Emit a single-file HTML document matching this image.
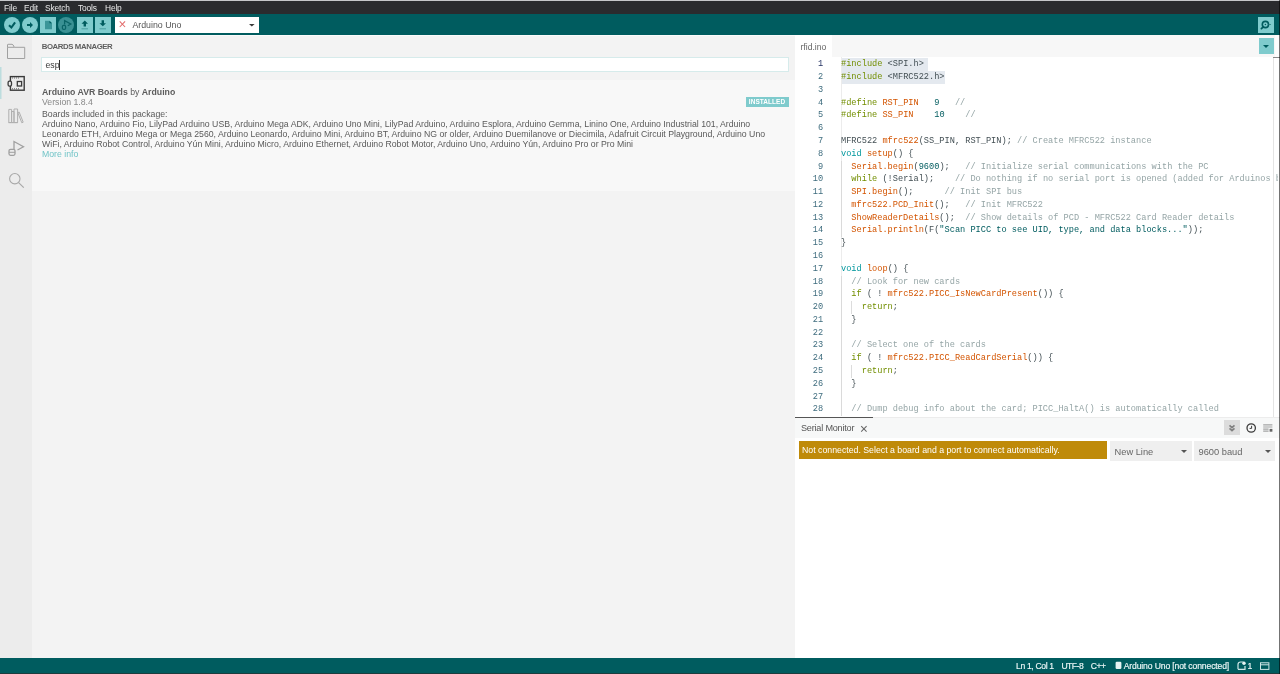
<!DOCTYPE html>
<html><head><meta charset="utf-8">
<style>
*{margin:0;padding:0;box-sizing:border-box}
html,body{width:1280px;height:674px;overflow:hidden;background:#fff;font-family:"Liberation Sans",sans-serif}
#root{position:absolute;left:0;top:0;width:1280px;height:674px;will-change:transform}
div,span,svg{position:absolute}
.t{white-space:pre;line-height:1}
#topline{left:0;top:0;width:1280px;height:1px;background:#c6c7ca}
#menubar{left:0;top:1px;width:1280px;height:12.5px;background:#2a2b2e;color:#e8e8e8;font-size:8.4px;letter-spacing:-0.15px}
#menubar span{top:1.8px}
#toolbar{left:0;top:13.5px;width:1280px;height:21.5px;background:#005c5f}
.cbtn{top:17px;width:16px;height:16px;border-radius:50%;background:#7fcbcd}
.sbtn{top:17px;width:16px;height:16px;background:#7fcbcd}
#boardsel{left:115px;top:17px;width:144px;height:16px;background:#fff}
#activity{left:0;top:35px;width:32px;height:623px;background:#ececec}
#panel{left:32px;top:35px;width:763px;height:623px;background:#f3f3f3}
#item{left:32px;top:80px;width:763px;height:110.5px;background:#f8f8f8}
#search{left:41px;top:57px;width:748px;height:15.4px;background:#fff;border:1px solid #d6ebeb}
#editor{left:795px;top:35px;width:485px;height:382px;background:#fff}
#tabbar{left:832px;top:35px;width:448px;height:22px;background:#f7f7f7}
#code{left:795px;top:57px;width:483px;height:359px;overflow:hidden;font-family:"Liberation Mono",monospace;font-size:8.63px}
.ln{position:absolute;left:0;width:28.2px;text-align:right;color:#5f8b98;white-space:pre}
.cl{position:absolute;left:46px;white-space:pre;color:#434f54}

.pp{color:#728e00}.fn{color:#d35400}.nm{color:#005c5f}.cm{color:#95a5a6}.kw{color:#00979d}
#smhead{left:795px;top:418px;width:485px;height:20px;background:#f7f8f8}
#smbody{left:795px;top:438px;width:485px;height:220px;background:#fff}
#status{left:0;top:658px;width:1280px;height:16px;background:#005c5f}
.st{color:#eef8f8;font-size:8.6px;top:662.3px;white-space:pre;line-height:1;-webkit-text-stroke:0.15px #eef8f8}
</style></head><body><div id="root">
<div id="topline"></div>
<div id="menubar"><span style="left:4px">File</span><span style="left:24px">Edit</span><span style="left:45px">Sketch</span><span style="left:78px">Tools</span><span style="left:105px">Help</span></div>
<div id="toolbar"></div>
<div class="cbtn" style="left:4px"></div>
<div class="cbtn" style="left:22px"></div>
<div class="sbtn" style="left:40px"></div>
<div class="cbtn" style="left:58.2px;background:#3a9194"></div>
<div class="sbtn" style="left:77px"></div>
<div class="sbtn" style="left:95px"></div>
<svg style="left:0;top:0" width="120" height="35" viewBox="0 0 120 35">
 <path d="M9 25.2 L11.4 27.5 L15.1 22.4" fill="none" stroke="#005c5f" stroke-width="2.1"/>
 <path d="M27 23.9 H30 V22 L33 25 L30 28 V26.1 H27 Z" fill="#005c5f"/>
 <path d="M45 20.7 H49.5 L52 23.2 V29.2 H45 Z" fill="#3a9598"/>
 <path d="M49.5 20.7 V23.2 H52 Z" fill="#005c5f"/>
 <path d="M64.6 24.6 V20.6 L70.8 24 L67.8 25.8" fill="none" stroke="#0a6467" stroke-width="1.3"/>
 <rect x="62.4" y="25.3" width="3.2" height="4.1" rx="1.2" fill="none" stroke="#0a6467" stroke-width="1.2"/>
 <path d="M81.5 23.7 L84.8 20.5 L88 23.7 H86 V26.5 H83.6 V23.7 Z" fill="#005c5f"/>
 <rect x="81.5" y="28.3" width="6.5" height="1" fill="#4a9fa1"/>
 <path d="M99.5 23.3 L102.8 26.3 L106 23.3 H104 V20.3 H101.6 V23.3 Z" fill="#005c5f"/>
 <rect x="99.5" y="28.3" width="6.5" height="1" fill="#4a9fa1"/>
</svg>
<div id="boardsel"></div>
<svg style="left:119px;top:21px" width="7" height="7"><path d="M0.7 0.4 L6.1 6 M6.1 0.4 L0.7 6" stroke="#e26a6a" stroke-width="1.05"/></svg>
<span class="t" style="left:132.4px;top:20.5px;color:#555;font-size:8.8px">Arduino Uno</span>
<svg style="left:249px;top:24px" width="6" height="3"><path d="M0 0H5.6L2.8 2.6Z" fill="#3a3a3a"/></svg>
<div style="left:1258px;top:17px;width:16px;height:16px;background:#7fcbcd"></div>
<svg style="left:1258px;top:17px" width="16" height="16" viewBox="0 0 16 16">
 <circle cx="7.4" cy="7.5" r="3.1" fill="none" stroke="#005c5f" stroke-width="1.6"/>
 <circle cx="7.4" cy="7.5" r="0.8" fill="#005c5f"/>
 <path d="M5.3 9.8 L3.4 11.6" stroke="#005c5f" stroke-width="1.8" stroke-linecap="round"/>
 <path d="M10.5 7.5 H13" stroke="#2a7f82" stroke-width=".8"/>
</svg>

<div id="activity"></div>
<div style="left:32px;top:35px;width:763px;height:1px;background:#fafbfb;z-index:1"></div>
<div id="panel"></div>
<div id="item"></div>
<div id="search"></div>
<svg style="left:0;top:35px" width="32" height="160" viewBox="0 35 32 160">
 <rect x="0" y="67" width="1.5" height="32" fill="#9fd4d6" opacity=".6"/>
 <path d="M7.5 47.3 V44.8 Q7.5 44.3 8 44.3 H12 Q13.3 44.3 14.3 47.3 H24.7 V58.5 H7.5 Z M7.5 47.3 H14.3" fill="none" stroke="#a0a0a0" stroke-width="1"/>
 <rect x="10.4" y="76.6" width="13.8" height="13.6" fill="none" stroke="#3a3a3a" stroke-width="1.4"/>
 <rect x="8.1" y="81.1" width="3.4" height="5" rx="1.3" fill="#ececec" stroke="#3a3a3a" stroke-width="1.3"/>
 <rect x="17.3" y="81.5" width="4.3" height="4.5" fill="none" stroke="#3a3a3a" stroke-width="1.3"/>
 <path d="M12.5 77.6 V78.4 M14.5 77.6 V78.4 M16.5 77.6 V78.4 M18.5 77.6 V78.4 M12.5 88.4 V89.2 M14.5 88.4 V89.2 M16.5 88.4 V89.2 M18.5 88.4 V89.2" stroke="#4a4a4a" stroke-width="1"/>
 <path d="M8.8 109.4 H11.6 V122.6 H8.8 Z M11.6 111.5 H14 V122.6 H11.6 Z M14 109 H17.6 V122.6 H14 Z M17.8 112.6 L19.2 112.1 L23.2 122.2 L21.8 122.8 Z M8.5 122.6 H17.8" fill="none" stroke="#b0b0b0" stroke-width="1"/>
 <path d="M14 150 V141.5 L23.5 146.7 L17.5 150" fill="none" stroke="#a0a0a0" stroke-width="1.3"/>
 <rect x="9" y="149.3" width="6" height="6" rx="1.5" fill="none" stroke="#a0a0a0" stroke-width="1.3"/>
 <path d="M9 152.3 H15" stroke="#a0a0a0" stroke-width="1"/>
 <circle cx="14.8" cy="178.7" r="5.2" fill="none" stroke="#a8a8a8" stroke-width="1.1"/>
 <path d="M18.6 182.6 L23.8 187.6" stroke="#a8a8a8" stroke-width="1.2"/>
</svg>
<div style="left:58.5px;top:60px;width:1px;height:10px;background:#333"></div>
<span class="t" style="left:41.7px;top:43px;font-size:7.8px;color:#5e5e5e;font-weight:bold;letter-spacing:-0.4px">BOARDS MANAGER</span>
<span class="t" style="left:45.5px;top:61.2px;font-size:8.7px;color:#3a3a3a">esp</span>

<span class="t" style="left:42px;top:87.9px;font-size:8.73px;color:#5c5c5c"><b>Arduino AVR Boards</b> by <b>Arduino</b></span>
<span class="t" style="left:42px;top:98.4px;font-size:8.73px;color:#888">Version 1.8.4</span>
<span class="t" style="left:42px;top:109.9px;font-size:8.73px;color:#5a5a5a">Boards included in this package:</span>
<span class="t" style="left:42px;top:119.5px;font-size:8.73px;color:#5a5a5a">Arduino Nano, Arduino Fio, LilyPad Arduino USB, Arduino Mega ADK, Arduino Uno Mini, LilyPad Arduino, Arduino Esplora, Arduino Gemma, Linino One, Arduino Industrial 101, Arduino</span>
<span class="t" style="left:42px;top:129.5px;font-size:8.73px;color:#5a5a5a">Leonardo ETH, Arduino Mega or Mega 2560, Arduino Leonardo, Arduino Mini, Arduino BT, Arduino NG or older, Arduino Duemilanove or Diecimila, Adafruit Circuit Playground, Arduino Uno</span>
<span class="t" style="left:42px;top:140px;font-size:8.73px;color:#5a5a5a">WiFi, Arduino Robot Control, Arduino Yún Mini, Arduino Micro, Arduino Ethernet, Arduino Robot Motor, Arduino Uno, Arduino Yún, Arduino Pro or Pro Mini</span>
<span class="t" style="left:42px;top:150.4px;font-size:8.73px;color:#72c4c7">More info</span>
<div style="left:746px;top:97.2px;width:42.5px;height:9.6px;background:#7fcbcd"></div>
<span class="t" style="left:748.8px;top:99.3px;font-size:6.5px;font-weight:bold;color:#fff;letter-spacing:0.05px">INSTALLED</span>

<div id="editor"></div>
<div id="tabbar"></div>
<span class="t" style="left:800.5px;top:43px;font-size:8.6px;color:#666">rfid.ino</span>
<div style="left:1274.5px;top:35px;width:5px;height:22px;background:#fdfdfd"></div>
<div style="left:1259px;top:38px;width:15px;height:16px;background:#7fcbcd"></div>
<svg style="left:1263px;top:45px" width="8" height="4"><path d="M0 0H6L3 3Z" fill="#005c5f"/></svg>
<div style="left:1273px;top:57px;width:1px;height:360px;background:#e4e4e4"></div>
<div style="left:1273px;top:57px;width:7px;height:1px;background:#888"></div>

<div id="code">
<div style="left:46px;top:1.30px;width:86.8px;height:12.78px;background:#e4e9ef"></div>
<div style="left:46px;top:14.08px;width:103.6px;height:12.78px;background:#e4e9ef"></div>
<div style="left:46px;top:0;width:1px;height:359px;background:#ececec"></div>
<div style="left:46px;top:103.54px;width:1px;height:76.68px;background:#dadada"></div>
<div style="left:46px;top:218.56px;width:1px;height:140.58px;background:#dadada"></div>
<div style="left:56.4px;top:244.12px;width:1px;height:12.78px;background:#dcdcdc"></div>
<div style="left:56.4px;top:308.02px;width:1px;height:12.78px;background:#dcdcdc"></div>
<span class="ln" style="top:1.30px;line-height:12.78px;color:#1d2c5e">1</span>
<span class="cl" style="top:1.30px;line-height:12.78px"><span class="pp" style="position:static">#include</span> &lt;SPI.h&gt;</span>
<span class="ln" style="top:14.08px;line-height:12.78px;color:#3d6b7d">2</span>
<span class="cl" style="top:14.08px;line-height:12.78px"><span class="pp" style="position:static">#include</span> &lt;MFRC522.h&gt;</span>
<span class="ln" style="top:26.86px;line-height:12.78px;color:#3d6b7d">3</span>
<span class="ln" style="top:39.64px;line-height:12.78px;color:#3d6b7d">4</span>
<span class="cl" style="top:39.64px;line-height:12.78px"><span class="pp" style="position:static">#define</span> <span class="fn" style="position:static">RST_PIN</span>   <span class="nm" style="position:static">9</span>   <span class="cm" style="position:static">//</span></span>
<span class="ln" style="top:52.42px;line-height:12.78px;color:#3d6b7d">5</span>
<span class="cl" style="top:52.42px;line-height:12.78px"><span class="pp" style="position:static">#define</span> <span class="fn" style="position:static">SS_PIN</span>    <span class="nm" style="position:static">10</span>    <span class="cm" style="position:static">//</span></span>
<span class="ln" style="top:65.20px;line-height:12.78px;color:#3d6b7d">6</span>
<span class="ln" style="top:77.98px;line-height:12.78px;color:#3d6b7d">7</span>
<span class="cl" style="top:77.98px;line-height:12.78px">MFRC522 <span class="fn" style="position:static">mfrc522</span>(SS_PIN, RST_PIN); <span class="cm" style="position:static">// Create MFRC522 instance</span></span>
<span class="ln" style="top:90.76px;line-height:12.78px;color:#3d6b7d">8</span>
<span class="cl" style="top:90.76px;line-height:12.78px"><span class="kw" style="position:static">void</span> <span class="fn" style="position:static">setup</span>() {</span>
<span class="ln" style="top:103.54px;line-height:12.78px;color:#3d6b7d">9</span>
<span class="cl" style="top:103.54px;line-height:12.78px">  <span class="fn" style="position:static">Serial.begin</span>(<span class="nm" style="position:static">9600</span>);   <span class="cm" style="position:static">// Initialize serial communications with the PC</span></span>
<span class="ln" style="top:116.32px;line-height:12.78px;color:#3d6b7d">10</span>
<span class="cl" style="top:116.32px;line-height:12.78px">  <span class="pp" style="position:static">while</span> (!Serial);    <span class="cm" style="position:static">// Do nothing if no serial port is opened (added for Arduinos based on ATmega32u4)</span></span>
<span class="ln" style="top:129.10px;line-height:12.78px;color:#3d6b7d">11</span>
<span class="cl" style="top:129.10px;line-height:12.78px">  <span class="fn" style="position:static">SPI.begin</span>();      <span class="cm" style="position:static">// Init SPI bus</span></span>
<span class="ln" style="top:141.88px;line-height:12.78px;color:#3d6b7d">12</span>
<span class="cl" style="top:141.88px;line-height:12.78px">  <span class="fn" style="position:static">mfrc522.PCD_Init</span>();   <span class="cm" style="position:static">// Init MFRC522</span></span>
<span class="ln" style="top:154.66px;line-height:12.78px;color:#3d6b7d">13</span>
<span class="cl" style="top:154.66px;line-height:12.78px">  <span class="fn" style="position:static">ShowReaderDetails</span>();  <span class="cm" style="position:static">// Show details of PCD - MFRC522 Card Reader details</span></span>
<span class="ln" style="top:167.44px;line-height:12.78px;color:#3d6b7d">14</span>
<span class="cl" style="top:167.44px;line-height:12.78px">  <span class="fn" style="position:static">Serial.println</span>(F(<span class="nm" style="position:static">&quot;Scan PICC to see UID, type, and data blocks...&quot;</span>));</span>
<span class="ln" style="top:180.22px;line-height:12.78px;color:#3d6b7d">15</span>
<span class="cl" style="top:180.22px;line-height:12.78px">}</span>
<span class="ln" style="top:193.00px;line-height:12.78px;color:#3d6b7d">16</span>
<span class="ln" style="top:205.78px;line-height:12.78px;color:#3d6b7d">17</span>
<span class="cl" style="top:205.78px;line-height:12.78px"><span class="kw" style="position:static">void</span> <span class="fn" style="position:static">loop</span>() {</span>
<span class="ln" style="top:218.56px;line-height:12.78px;color:#3d6b7d">18</span>
<span class="cl" style="top:218.56px;line-height:12.78px">  <span class="cm" style="position:static">// Look for new cards</span></span>
<span class="ln" style="top:231.34px;line-height:12.78px;color:#3d6b7d">19</span>
<span class="cl" style="top:231.34px;line-height:12.78px">  <span class="pp" style="position:static">if</span> ( ! <span class="fn" style="position:static">mfrc522.PICC_IsNewCardPresent</span>()) {</span>
<span class="ln" style="top:244.12px;line-height:12.78px;color:#3d6b7d">20</span>
<span class="cl" style="top:244.12px;line-height:12.78px">    <span class="pp" style="position:static">return</span>;</span>
<span class="ln" style="top:256.90px;line-height:12.78px;color:#3d6b7d">21</span>
<span class="cl" style="top:256.90px;line-height:12.78px">  }</span>
<span class="ln" style="top:269.68px;line-height:12.78px;color:#3d6b7d">22</span>
<span class="ln" style="top:282.46px;line-height:12.78px;color:#3d6b7d">23</span>
<span class="cl" style="top:282.46px;line-height:12.78px">  <span class="cm" style="position:static">// Select one of the cards</span></span>
<span class="ln" style="top:295.24px;line-height:12.78px;color:#3d6b7d">24</span>
<span class="cl" style="top:295.24px;line-height:12.78px">  <span class="pp" style="position:static">if</span> ( ! <span class="fn" style="position:static">mfrc522.PICC_ReadCardSerial</span>()) {</span>
<span class="ln" style="top:308.02px;line-height:12.78px;color:#3d6b7d">25</span>
<span class="cl" style="top:308.02px;line-height:12.78px">    <span class="pp" style="position:static">return</span>;</span>
<span class="ln" style="top:320.80px;line-height:12.78px;color:#3d6b7d">26</span>
<span class="cl" style="top:320.80px;line-height:12.78px">  }</span>
<span class="ln" style="top:333.58px;line-height:12.78px;color:#3d6b7d">27</span>
<span class="ln" style="top:346.36px;line-height:12.78px;color:#3d6b7d">28</span>
<span class="cl" style="top:346.36px;line-height:12.78px">  <span class="cm" style="position:static">// Dump debug info about the card; PICC_HaltA() is automatically called</span></span>
</div>

<div style="left:873px;top:417px;width:407px;height:1px;background:#ececec"></div>
<div style="left:795px;top:417px;width:78px;height:1px;background:#555"></div>
<div id="smhead"></div>
<div id="smbody"></div>
<span class="t" style="left:801px;top:423.5px;font-size:9.1px;letter-spacing:-0.2px;color:#555">Serial Monitor</span>
<svg style="left:860px;top:424.5px" width="8" height="8"><path d="M1.2 1.2 L6.6 6.6 M6.6 1.2 L1.2 6.6" stroke="#666" stroke-width="1.05"/></svg>
<div style="left:799px;top:441.3px;width:307.5px;height:18px;background:#bf8a09"></div>
<span class="t" style="left:802px;top:446px;font-size:8.75px;color:#fff">Not connected. Select a board and a port to connect automatically.</span>
<div style="left:1110px;top:441px;width:82px;height:20px;background:#efefef"></div>
<span class="t" style="left:1114.5px;top:448px;font-size:9.3px;color:#666">New Line</span>
<svg style="left:1181px;top:450px" width="8" height="4"><path d="M0 0H6L3 3Z" fill="#555"/></svg>
<div style="left:1194px;top:441px;width:81px;height:20px;background:#efefef"></div>
<span class="t" style="left:1198.5px;top:448px;font-size:9.3px;color:#666">9600 baud</span>
<svg style="left:1265px;top:450px" width="8" height="4"><path d="M0 0H6L3 3Z" fill="#555"/></svg>
<div style="left:1224px;top:420px;width:16px;height:15px;background:#dcdcdc"></div>
<svg style="left:1224px;top:416px" width="56" height="22" viewBox="1224 416 56 22">
 <path d="M1229.5 425.3 L1232 427.6 L1234.5 425.3 M1229.5 428.3 L1232 430.6 L1234.5 428.3" fill="none" stroke="#808080" stroke-width="1.6"/>
 <circle cx="1251.2" cy="428" r="4.2" fill="none" stroke="#3c3c3c" stroke-width="1.3"/>
 <path d="M1251.6 425.8 V428.4 H1249.6" fill="none" stroke="#3c3c3c" stroke-width="1"/>
 <path d="M1263.2 424.9 H1272.4 M1263.2 427 H1272.4 M1263.2 429.1 H1268.6 M1263.2 431.2 H1268.6" stroke="#a4a4a4" stroke-width="1.2"/>
 <rect x="1269.6" y="428.9" width="2.8" height="2.8" fill="#666"/>
</svg>

<div id="status"></div>
<div style="left:0;top:673px;width:1280px;height:1px;background:#1d3d3e"></div>
<span class="st" style="left:1016px;letter-spacing:-0.35px">Ln 1, Col 1</span>
<span class="st" style="left:1061.4px;letter-spacing:-0.5px">UTF-8</span>
<span class="st" style="left:1090.8px;letter-spacing:-0.45px">C++</span>
<span class="st" style="left:1123.7px;letter-spacing:-0.13px">Arduino Uno [not connected]</span>
<span class="st" style="left:1247.5px">1</span>
<svg style="left:1110px;top:658px" width="170" height="15" viewBox="1110 658 170 15">
 <rect x="1115.6" y="661.8" width="5.8" height="7.2" rx="1.2" fill="#e6f3f3"/>
 <path d="M1238 669.3 V664.5 Q1238 662 1240.6 662 H1243.5 M1238 669.3 H1245 V666" fill="none" stroke="#cfe7e7" stroke-width="1.2"/>
 <circle cx="1244" cy="663.3" r="1.7" fill="#e6f3f3"/>
 <rect x="1260.5" y="662.8" width="8.4" height="6.6" fill="none" stroke="#cfe7e7" stroke-width="1"/>
 <path d="M1260.5 664.8 H1268.9" stroke="#cfe7e7" stroke-width="1"/>
</svg>
<div style="left:1279px;top:0;width:1px;height:674px;background:rgba(0,0,0,.55)"></div>
</div></body></html>
